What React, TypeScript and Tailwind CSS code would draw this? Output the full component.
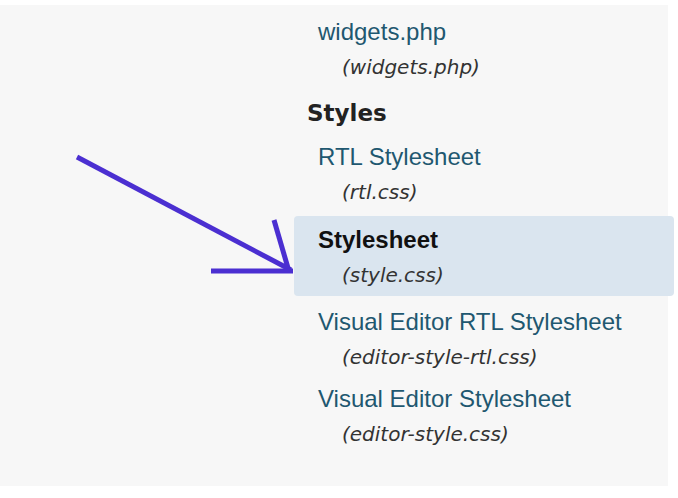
// Theme file list from the editor sidebar, with the active stylesheet highlighted
// and a callout arrow pointing at it.

const link = "block text-[24px] leading-[28px] text-[#1f5870] font-['Liberation_Sans',Arial,sans-serif]";
const file =
  "block pl-[24px] text-[20px] leading-[24px] italic text-[#333] font-['DejaVu_Sans',Verdana,sans-serif]";

function Item({ name, path, className = "" }: { name: string; path: string; className?: string }) {
  return (
    <li className={"pl-[24px] " + className}>
      <a className={link}>{name}</a>
      <span className={"mt-[9px] " + file}>({path})</span>
    </li>
  );
}

export default function App() {
  return (
    <div className="relative h-[498px] w-[678px] overflow-hidden bg-white">
      <div className="mt-[5px] h-[481px] w-[668px] bg-[#f7f7f7]">
        <ul className="ml-[294px] w-[380px] pt-[13px]">
          <Item name="widgets.php" path="widgets.php" />
          <li className="mt-[20px] pl-[13px] text-[23px] leading-[28px] font-bold text-[#222] font-['DejaVu_Sans',Verdana,sans-serif]">
            Styles
          </li>
          <Item name="RTL Stylesheet" path="rtl.css" className="mt-[16px]" />
          <li className="mt-[12px] rounded-[4px] bg-[#dae5ef] pl-[24px] pt-[10px] pb-[9px]">
            <span className="block text-[24px] leading-[28px] font-bold text-[#111] font-['Liberation_Sans',Arial,sans-serif]">
              Stylesheet
            </span>
            <span className={"mt-[9px] " + file}>(style.css)</span>
          </li>
          <Item name="Visual Editor RTL Stylesheet" path="editor-style-rtl.css" className="mt-[12px]" />
          <Item name="Visual Editor Stylesheet" path="editor-style.css" className="mt-[16px]" />
        </ul>
      </div>

      {/* callout arrow */}
      <svg className="pointer-events-none absolute left-0 top-0" width="678" height="498">
        <g stroke="#4b2fd1" strokeWidth="5" fill="none">
          <line x1="77" y1="157" x2="291" y2="270" />
          <line x1="274" y1="220" x2="288" y2="268" />
          <line x1="211" y1="271" x2="293" y2="271" />
        </g>
      </svg>
    </div>
  );
}
